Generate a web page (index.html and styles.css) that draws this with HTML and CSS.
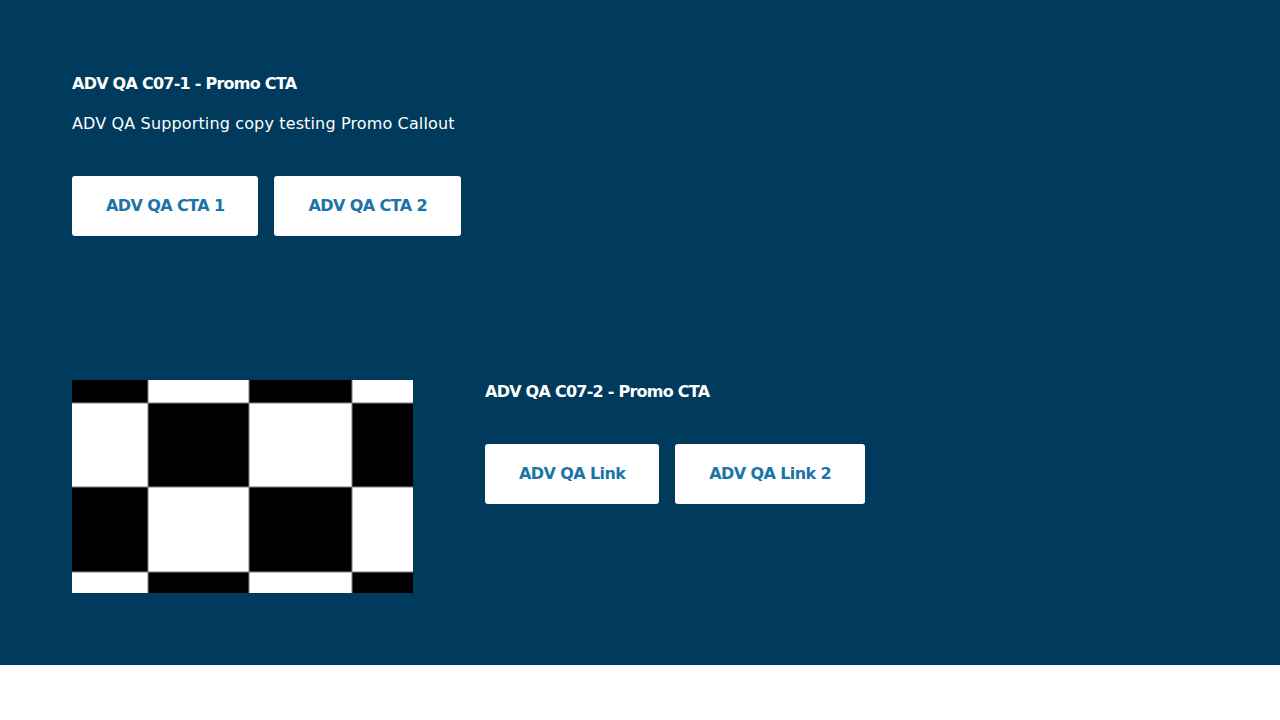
FILE: index.html
```html
<!DOCTYPE html>
<html lang="en">
<head>
<meta charset="utf-8">
<title>Promo CTA</title>
<link rel="stylesheet" href="styles.css">
</head>
<body>
<main class="promo-area">
  <section class="promo">
    <div class="promo-body">
      <h2 class="promo-title">ADV QA C07-1 - Promo CTA</h2>
      <p class="promo-copy">ADV QA Supporting copy testing Promo Callout</p>
      <div class="promo-actions">
        <a class="btn" href="#">ADV QA CTA 1</a>
        <a class="btn" href="#">ADV QA CTA 2</a>
      </div>
    </div>
  </section>
  <section class="promo promo-media">
    <div class="promo-image">
      <svg width="341" height="213" viewBox="0 0 341 213" xmlns="http://www.w3.org/2000/svg">
        <rect width="341" height="213" fill="#fff"/>
        <g fill="#000">
          <rect x="0" y="0" width="76" height="23"/>
          <rect x="177" y="0" width="103" height="23"/>
          <rect x="76" y="23" width="101" height="84"/>
          <rect x="280" y="23" width="61" height="84"/>
          <rect x="0" y="107" width="76" height="85"/>
          <rect x="177" y="107" width="103" height="85"/>
          <rect x="76" y="192" width="101" height="21"/>
          <rect x="280" y="192" width="61" height="21"/>
        </g>
        <g stroke="#808080" stroke-width="1.5" opacity="0.7">
          <line x1="76" y1="0" x2="76" y2="213"/>
          <line x1="177" y1="0" x2="177" y2="213"/>
          <line x1="280" y1="0" x2="280" y2="213"/>
          <line x1="0" y1="23" x2="341" y2="23"/>
          <line x1="0" y1="107" x2="341" y2="107"/>
          <line x1="0" y1="192" x2="341" y2="192"/>
        </g>
      </svg>
    </div>
    <div class="promo-body">
      <h2 class="promo-title">ADV QA C07-2 - Promo CTA</h2>
      <div class="promo-actions promo-actions-tight">
        <a class="btn" href="#">ADV QA Link</a>
        <a class="btn" href="#">ADV QA Link 2</a>
      </div>
    </div>
  </section>
</main>
</body>
</html>
```

FILE: styles.css
```css
html, body {
  margin: 0;
  padding: 0;
  background: #ffffff;
}

body {
  font-family: "DejaVu Sans", "Liberation Sans", sans-serif;
  color: #ffffff;
}

.promo-area {
  background: #003a5c;
}

.promo {
  padding: 72px 72px;
  display: flex;
  align-items: flex-start;
}

.promo-media {
  gap: 72px;
}

.promo-image {
  width: 341px;
  height: 213px;
  flex: none;
}

.promo-image svg {
  display: block;
}

.promo-title {
  margin: 0;
  padding-top: 2px;
  font-size: 16px;
  line-height: 20px;
  font-weight: 700;
  letter-spacing: -0.75px;
}

.promo-copy {
  margin: 18px 0 0;
  font-size: 16px;
  line-height: 24px;
  font-weight: 400;
  letter-spacing: 0.14px;
}

.promo-actions {
  margin-top: 40px;
  display: flex;
  gap: 16px;
}

.promo-actions-tight {
  margin-top: 42px;
}

.btn {
  display: inline-flex;
  align-items: center;
  justify-content: center;
  height: 60px;
  padding: 0 34px 1px;
  box-sizing: border-box;
  background: #ffffff;
  border-radius: 3px;
  color: #1b74a8;
  font-size: 16px;
  font-weight: 700;
  letter-spacing: -0.6px;
  text-decoration: none;
  white-space: nowrap;
}
```
